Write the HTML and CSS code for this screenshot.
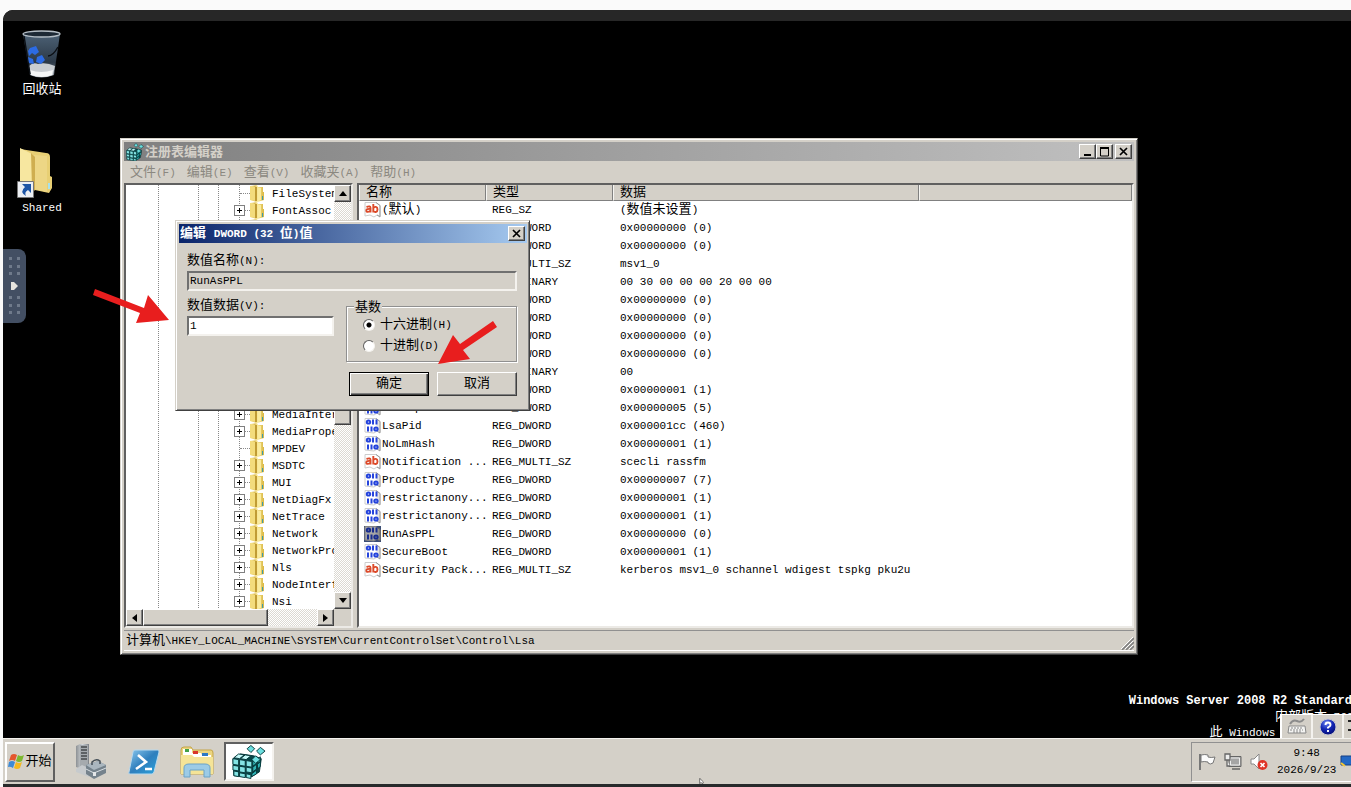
FILE: index.html
```html
<!DOCTYPE html>
<html lang="zh-CN">
<head>
<meta charset="utf-8">
<title>注册表编辑器</title>
<link rel="stylesheet" href="styles.css">
</head>
<body>
<svg class="defs" aria-hidden="true">
  <defs>
    <linearGradient id="gold" x1="0" x2="1"><stop offset="0" stop-color="#fff3ae"/><stop offset=".35" stop-color="#d9b94e"/><stop offset=".5" stop-color="#fbeb9d"/><stop offset="1" stop-color="#d8b640"/></linearGradient>
    <linearGradient id="glass" x1="0" y1="0" x2="0" y2="1"><stop offset="0" stop-color="#4c6175"/><stop offset=".65" stop-color="#2c3947"/><stop offset="1" stop-color="#8b939b"/></linearGradient>
    <linearGradient id="psblue" x1="0" y1="0" x2="1" y2="1"><stop offset="0" stop-color="#8cc8ee"/><stop offset=".5" stop-color="#2f7fbd"/><stop offset="1" stop-color="#2aa3dd"/></linearGradient>
    <linearGradient id="steel" x1="0" x2="1"><stop offset="0" stop-color="#8d9195"/><stop offset=".5" stop-color="#d3d7da"/><stop offset="1" stop-color="#7c8187"/></linearGradient>
    <radialGradient id="help" cx=".4" cy=".25" r=".8"><stop offset="0" stop-color="#6d86f0"/><stop offset=".5" stop-color="#1226b4"/><stop offset="1" stop-color="#020a70"/></radialGradient>
    <symbol id="i-folder" viewBox="0 0 15 17"><path d="M0 1l7-1 1 2 5 0v5h1v8l-7 2-7-2z" fill="url(#gold)"/><path d="M0 1l5 1 1 14-6-1z" fill="#f3dc7c"/><path d="M5 2l2 0v14l-2 0z" fill="#c09c34"/><path d="M8 3l3 0v12l-3 1z" fill="#faec9f"/><path d="M12 11h1v4h-1z" fill="#3f9ba8"/></symbol>
    <symbol id="i-bin" viewBox="0 0 17 16"><path d="M1 .5h11l4 3V14l-3-1-3 2-9-1z" fill="#fff" stroke="#ccc"/><path d="M12 .5l4 3V15l-3-2" fill="#e4e4e4" stroke="#999"/><g fill="none" stroke="#2443dc" stroke-width="2"><ellipse cx="4.500" cy="4" rx="1.700" ry="1.600"/><path d="M9 1.500v5M12.500 1.500v5M4 8.500v5M7.500 8.500v5"/><ellipse cx="12" cy="11" rx="1.700" ry="1.600"/></g></symbol>
    <symbol id="i-str" viewBox="0 0 17 16"><path d="M1 .5h11l4 3V14l-3-1-3 2-4-2-5 1z" fill="#fff" stroke="#ccc"/><path d="M12 .5l4 3V15l-3-2" fill="none" stroke="#999"/><g fill="none" stroke="#dc4a2a" stroke-width="1.900"><path d="M2.500 5q4-1.600 4 1v4.500M6.500 6.900q-4.200-.3-4.200 1.500 0 1.500 1.600 1.500 2 0 2.600-1.700M9.300 2v8.500M9.300 6.200q1-1.600 2.600-1.300 1.600.3 1.600 2.500t-1.700 2.600q-1.500.2-2.500-1"/></g></symbol>
    <symbol id="i-cubes" viewBox="0 0 36 36"><g stroke="#06383a" stroke-width="1" stroke-linejoin="round"><path d="M1 15l8-5 14 2 8 3-2 14-10 6-17-2z" fill="#074547"/><g fill="#84e4e4"><path d="M1 15l6 1v6l-6-1zM8 16l6 1v6l-6-1zM1 22l6 1v5l-6-1zM8 23l6 1v6l-6-1zM2 28l5 1v5l-5-1zM8 30l6 1v4l-6-1zM15 17l6 1v6l-6-1zM15 24l6 1v5l-6-1zM15 31l5 1v4l-5-1z"/></g><g fill="#c5fafa"><path d="M2 14l5-4 6 1-5 4zM9 15l5-4 6 1-5 4z"/></g><g fill="#2fb4b6"><path d="M22 18l4-3v5l-4 3zM22 24l4-3v5l-4 3zM21 31l5-4v4l-5 3zM27 15l3-2v5l-3 2zM27 21l3-3v5l-3 3z"/></g><g fill="#6cdfe0"><path d="M20 1l4 3.500-4 4-4-4zM30 3l5 4-5 4-4-4zM25 12l5 4-5 4-4-4z"/></g></g></symbol>
  </defs>
</svg>

<main class="screen">
  <div class="strip"></div>
  <section class="desktop">
    <a class="shortcut recycle" href="#">
      <svg width="40" height="48" viewBox="0 0 40 48" aria-hidden="true"><path d="M1 4l37 0-6 41q-13 5-24 0z" fill="url(#glass)"/><ellipse cx="19.500" cy="4" rx="18.500" ry="3" fill="#1d2935" stroke="#b5bec6" stroke-width="1.300"/><path d="M7 36q4-4 9-2 8-2 17 2l-2 9q-11 4-22 0z" fill="#c9cdd1"/><path d="M8 40q11 4 23 0l-1 5q-10 4-21 0z" fill="#f5f6f6"/><path d="M26 26q5 0 10-9M2 6l6 38" fill="none" stroke="#0b0f14" stroke-width="1.500"/><path d="M8 18l6-2 3 6-4 3-3-2-3 3-1-5zM6 27l5 2 1 5-5-1zM15 27l5-2 3 5-4 4-5-2z" fill="#2c6be4"/></svg>
      <span class="zh">回收站</span>
    </a>
    <a class="shortcut shared" href="#">
      <svg width="36" height="50" viewBox="0 0 36 50" aria-hidden="true"><path d="M3 1l26 4q4 0 4 4v19l2 1v11l-3 5-14-3z" fill="#e8cf74"/><path d="M3 0l12 6q2 1 2 4v37L3 40z" fill="#f7e7a0"/><path d="M17 7l13 1v36l-13-3z" fill="#edd685"/><path d="M14 5l4 4v34l-3-3z" fill="#cfae50"/><path d="M31 35h2v6h-2z" fill="#a8e1ec"/><path d="M.5 33.500h16v16H.5z" fill="#eceff3" stroke="#777"/><path d="M5 36h9v9l-3-3q-4 2-2 6-7-4-1-9z" fill="#1d55a5"/></svg>
      <span class="en">Shared</span>
    </a>
    <button class="drawer" type="button" aria-label="展开工具栏">
      <svg width="23" height="74" viewBox="0 0 23 74" aria-hidden="true"><g fill="#6f7a8b"><path d="M6 8h3v3H6zM14 8h3v3h-3zM6 16h3v3H6zM14 16h3v3h-3zM6 23h3v3H6zM14 23h3v3h-3zM6 47h3v3H6zM14 47h3v3h-3zM6 55h3v3H6zM14 55h3v3h-3zM6 62h3v3H6zM14 62h3v3h-3z"/></g><path d="M8 33h3l4 4-4 4H8z" fill="#e6e3de"/></svg>
    </button>

    <div class="watermark">
      <b class="edition">Windows Server 2008 R2 Standard</b>
      <span><span class="zh">内部版本</span> 7601</span>
      <span><span class="zh">此</span> Windows <span class="zh">副本不是正版</span></span>
    </div>

    <div class="langbar">
      <button type="button" aria-label="键盘"><svg width="20" height="18" viewBox="0 0 20 18" aria-hidden="true"><path d="M3 6q3-5 7-3t7-2" fill="none" stroke="#8b8b8b" stroke-width="2"/><path d="M2 8h16l1 7H1z" fill="#f4f4f2" stroke="#888"/><path d="M4 10h12M3 12h13M6 14h8" stroke="#888" stroke-dasharray="2 1"/></svg></button>
      <button type="button" aria-label="帮助"><svg width="18" height="18" viewBox="0 0 18 18" aria-hidden="true"><circle cx="9" cy="9" r="8" fill="url(#help)" stroke="#c7c7d0"/><path d="M6.500 7q0-2.500 2.500-2.500T11.500 7Q11.500 8.300 9 9.500v1M9 12v2" fill="none" stroke="#fff" stroke-width="1.900"/></svg></button>
      <span class="langmore"></span>
    </div>

    <section class="window editor" aria-label="注册表编辑器">
      <header class="titlebar">
        <svg width="18" height="18" aria-hidden="true"><use href="#i-cubes"/></svg>
        <h1>注册表编辑器</h1>
        <button class="cap" type="button" aria-label="最小化"><svg width="12" height="10" viewBox="0 0 12 10"><path d="M2 8h7" stroke="#000" stroke-width="2"/></svg></button>
        <button class="cap" type="button" aria-label="最大化"><svg width="12" height="10" viewBox="0 0 12 10"><path d="M1.500 0v9h8V0" fill="none" stroke="#000"/><path d="M1 1h9" stroke="#000" stroke-width="2"/></svg></button>
        <button class="cap last" type="button" aria-label="关闭"><svg width="12" height="10" viewBox="0 0 12 10"><path d="M2 1l7 7M9 1L2 8" stroke="#000" stroke-width="1.700"/></svg></button>
      </header>
      <nav class="menu">
        <a><span class="zh">文件</span>(F)</a><a><span class="zh">编辑</span>(E)</a><a><span class="zh">查看</span>(V)</a><a><span class="zh">收藏夹</span>(A)</a><a><span class="zh">帮助</span>(H)</a>
      </nav>
      <div class="panes">
        <div class="pane tree">
          <ul class="keys" id="keys"></ul>
          <div class="vbar"><button type="button" class="sb" aria-label="向上"><svg width="8" height="5" viewBox="0 0 8 5"><path d="M0 5l4-5 4 5z"/></svg></button><div class="vthumb"></div><button type="button" class="sb" aria-label="向下"><svg width="8" height="5" viewBox="0 0 8 5"><path d="M0 0l4 5 4-5z"/></svg></button></div>
          <div class="hbar"><button type="button" class="sb" aria-label="向左"><svg width="5" height="8" viewBox="0 0 5 8"><path d="M5 0L0 4l5 4z"/></svg></button><div class="hthumb"></div><button type="button" class="sb" aria-label="向右"><svg width="5" height="8" viewBox="0 0 5 8"><path d="M0 0l5 4-5 4z"/></svg></button></div>
        </div>
        <div class="pane list">
          <table>
            <colgroup><col class="c-name"><col class="c-type"><col class="c-data"><col></colgroup>
            <thead><tr><th>名称</th><th>类型</th><th>数据</th><th></th></tr></thead>
            <tbody id="values"></tbody>
          </table>
        </div>
      </div>
      <footer class="status"><span><span class="zh">计算机</span>\HKEY_LOCAL_MACHINE\SYSTEM\CurrentControlSet\Control\Lsa</span>
        <svg width="13" height="13" viewBox="0 0 13 13" aria-hidden="true"><path d="M1 13L13 1M5 13l8-8M9 13l4-4" stroke="#808080" stroke-width="1.600"/><path d="M0 12L12 0M4 12l8-8M8 12l4-4" stroke="#fff"/></svg>
      </footer>
    </section>

    <form class="window dialog" aria-labelledby="dlg">
      <header class="titlebar active">
        <h2 id="dlg">编辑 <span class="en">DWORD (32 </span>位<span class="en">)</span>值</h2>
        <button class="cap last" type="button" aria-label="关闭"><svg width="12" height="10" viewBox="0 0 12 10"><path d="M2 1l7 7M9 1L2 8" stroke="#000" stroke-width="1.700"/></svg></button>
      </header>
      <div class="body">
        <label for="vname"><span class="zh">数值名称</span>(N):</label>
        <input class="field" id="vname" type="text" value="RunAsPPL" readonly>
        <div class="cols">
          <div class="value">
            <label for="vdata"><span class="zh">数值数据</span>(V):</label>
            <input class="field edit" id="vdata" type="text" value="1">
          </div>
          <fieldset>
            <legend>基数</legend>
            <label><input type="radio" name="base" checked><span><span class="zh">十六进制</span>(H)</span></label>
            <label><input type="radio" name="base"><span><span class="zh">十进制</span>(D)</span></label>
          </fieldset>
        </div>
        <div class="actions"><button class="btn default" type="button">确定</button><button class="btn" type="button">取消</button></div>
      </div>
    </form>

    <svg class="arrow first" width="80" height="38" viewBox="0 0 80 38" aria-hidden="true"><path d="M4 0L53 19l4-13 21 25-33 3 4-10L2 6z" fill="#e81e1e"/></svg>
    <svg class="arrow second" width="64" height="46" viewBox="0 0 64 46" aria-hidden="true"><path d="M57 0l4 6-34 23 7 9-32 5 15-29 7 9z" fill="#e81e1e"/></svg>
  </section>

  <footer class="taskbar">
    <button class="start" type="button">
      <svg width="17" height="17" viewBox="0 0 17 17" aria-hidden="true"><path d="M3 2q3-2 6 0L7 8Q4 6 1 8z" fill="#e4572e"/><path d="M10 2q3 2 6 0l-2 6q-3 2-6 0z" fill="#7cb82f"/><path d="M1 9q3-2 6 0l-2 6q-3-2-5-1z" fill="#3d8ad6"/><path d="M8 9q3 2 6 0l-2 6q-3 2-6 0z" fill="#f4b81f"/></svg>
      开始
    </button>
    <a class="pin" href="#" aria-label="服务器管理器"><svg width="32" height="36" viewBox="0 0 32 36" aria-hidden="true"><path d="M1 2l4-2h9v23l-5 3-8-3z" fill="url(#steel)"/><path d="M5 1h8v22l-4 2-4-2z" fill="#a5aaae"/><path d="M6 3h6M6 6h6M6 9h6M6 12h6M6 15h6" stroke="#45494c" stroke-width="1.300"/><path d="M1 25l6-4 9 4-2 8-13-5z" fill="#c6cacd"/><path d="M11 21l12-4 8 4v8l-12 6-8-5z" fill="#75828c"/><path d="M11 21l12-4 8 4-12 5z" fill="#aab6bf"/><path d="M17 21v-3q4-4 8-1v3" fill="none" stroke="#454f58" stroke-width="1.500"/><path d="M11 25l8 4 12-5" fill="none" stroke="#d7dde2"/><path d="M18 28h3v4h-3z" fill="#e3e6e8"/></svg></a>
    <a class="pin" href="#" aria-label="PowerShell"><svg width="32" height="26" viewBox="0 0 32 26" aria-hidden="true"><path d="M7 1h23q1 0 1 2l-5 20q-1 2-2 2H2q-2 0-1-2L5 3q0-2 2-2z" fill="url(#psblue)" stroke="#b9d8ec"/><path d="M10 6l8 7-10 7M17 20h7" fill="none" stroke="#fff" stroke-width="2.600"/></svg></a>
    <a class="pin" href="#" aria-label="资源管理器"><svg width="34" height="34" viewBox="0 0 34 34" aria-hidden="true"><path d="M1 5q0-3 3-3h7l2 3h18q2 0 2 3v21H1z" fill="#ecd57f" stroke="#c5a548"/><path d="M3 4h9v4h9l1 2h9v3H3z" fill="#fff"/><path d="M5 4h4v3H5z" fill="#43a047"/><path d="M13 6h5v3h-5z" fill="#d9372b"/><path d="M22 8h6v3h-6z" fill="#2d78c5"/><path d="M1 10h11l2 2h19v17H1z" fill="#f5e497"/><path d="M4 32V23q0-4 5-4h16q5 0 5 4v9h-6v-7H10v7z" fill="#9ccbe6" stroke="#6ba3c8"/></svg></a>
    <a class="pin current" href="#" aria-label="注册表编辑器"><svg width="34" height="35" aria-hidden="true"><use href="#i-cubes"/></svg></a>
    <div class="tray">
      <svg width="18" height="18" viewBox="0 0 18 18" aria-hidden="true"><path d="M2 1v16" stroke="#777" stroke-width="2"/><path d="M3 2q4-1 7 0v2q3 1 7 0l-2 6q-3 2-5 0v-1q-4-1-7 0z" fill="#fbfbfb" stroke="#777"/></svg>
      <svg width="18" height="18" viewBox="0 0 18 18" aria-hidden="true"><path d="M5 3.500h12v10H5z" fill="#a5a5a5" stroke="#666"/><path d="M6.500 5h9v7h-9z" fill="none" stroke="#eee"/><path d="M1 1h5v6H1zM3 7v6h3M8 16h8" fill="#eee" stroke="#666" stroke-width="1.300"/></svg>
      <svg width="18" height="18" viewBox="0 0 18 18" aria-hidden="true"><path d="M1 6h3l5-5v15l-5-5H1z" fill="#fff" stroke="#888"/><circle cx="12.500" cy="12" r="5" fill="#df3427"/><path d="M10.500 10l4 4M14.500 10l-4 4" stroke="#fff" stroke-width="1.700"/></svg>
      <time class="clock">9:48<br>2026/9/23</time>
      <svg class="peek" width="18" height="18" viewBox="0 0 18 18" aria-hidden="true"><path d="M1 3h17v9H1z" fill="#2368c4" stroke="#173f82"/><path d="M1 10l4 3" stroke="#f3c735" stroke-width="2"/></svg>
    </div>
    <svg class="pointer" width="7" height="10" viewBox="0 0 7 10" aria-hidden="true"><path d="M.5.5v9l2-2 3 2 1-3z" fill="#fff" stroke="#222"/></svg>
  </footer>
  <div class="base"></div>
</main>
<script src="app.js"></script>
</body>
</html>
```

FILE: styles.css
```css
* { box-sizing: border-box; }
body {
  margin: 0;
  height: 100vh;
  padding: 10px 0 0 3px;
  overflow: hidden;
  background: #fafafa;
  color: #000;
  font: 11px/16px "Liberation Mono", "Noto Sans CJK SC", monospace;
}
button, input { font: inherit; color: inherit; border-radius: 0; }
button { padding: 0; }
svg { display: block; flex: none; }
.defs { position: absolute; width: 0; height: 0; }
.zh, h1, h2, th, legend, .btn, .start { font-family: "Liberation Mono", "Noto Sans CJK SC", sans-serif; font-size: 13px; }
.en { font-size: 11px; }

.screen { height: 100%; display: flex; flex-direction: column; overflow: hidden; border-top-left-radius: 10px; background: #000; }
.strip { height: 11px; flex: none; background: #272727; }
.base { height: 3px; flex: none; background: #272a2b; }
.desktop { flex: 1; min-height: 0; position: relative; overflow: hidden; background: #000; }

.shortcut { position: absolute; width: 78px; display: flex; flex-direction: column; align-items: center; color: #fff; text-decoration: none; }
.recycle { left: 0; top: 9px; gap: 4px; }
.shared { left: 0; top: 127px; gap: 2px; }
.shared svg { margin-right: 14px; }
.drawer { position: absolute; left: 0; top: 228px; border: 0; background: #434f63; border-radius: 0 8px 8px 0; overflow: hidden; }

.watermark { position: absolute; right: -9px; bottom: -3px; display: flex; flex-direction: column; align-items: flex-end; color: #fff; line-height: 15px; white-space: pre; }
.edition { font-size: 12px; margin-right: 8px; }
.langbar { position: absolute; right: 0; bottom: 0; width: 71px; height: 24px; display: flex; background: #d4d0c8; border-top: 1px solid #fff; border-left: 2px solid #fff; }
.langbar button { width: 32px; display: grid; place-items: center; border: 0; border-right: 2px solid #f4f2ee; background: none; }
.langmore { margin: 5px 0 0 4px; width: 3px; height: 11px; border: solid #222; border-width: 2px 0; }

.window { position: absolute; display: flex; flex-direction: column; background: #d4d0c8; border: 1px solid; border-color: #d4d0c8 #404040 #404040 #d4d0c8; box-shadow: inset 1px 1px #fff, inset -1px -1px #808080; padding: 3px; }
.titlebar { display: flex; align-items: center; height: 19px; flex: none; padding: 0 2px; color: #d4d0c8; background: linear-gradient(90deg, #808080, #c0c0c0); }
.titlebar h1, .titlebar h2 { flex: 1; margin: 0; font-weight: 700; line-height: 18px; white-space: pre; }
.titlebar h1 { padding: 2px 0 0 1px; }
.titlebar.active { padding-left: 1px; color: #fff; background: linear-gradient(90deg, #0a246a, #a6caf0); }
.cap, .sb, .vthumb, .hthumb, .btn { background: #d4d0c8; border: 1px solid; border-color: #fff #404040 #404040 #fff; box-shadow: inset -1px -1px #808080; }
.cap { width: 17px; height: 15px; display: grid; place-items: center; }
.cap.last { margin-left: 2px; }
.titlebar.active .cap { margin-left: 0; }

.editor { left: 117px; top: 117px; width: 1018px; height: 517px; }
.menu { height: 22px; flex: none; display: flex; align-items: center; gap: 11px; padding: 2px 0 0 6px; color: #8b8880; }
.panes { flex: 1; min-height: 0; display: flex; gap: 4px; }
.pane { background: #fff; border: 2px solid; border-color: #606060 #eceae6 #eceae6 #606060; overflow: hidden; }
.tree { width: 229px; flex: none; display: grid; grid-template: minmax(0, 1fr) 17px / minmax(0, 1fr) 17px; background: #d4d0c8; }
.keys {
  margin: 0; padding: 0; list-style: none; overflow: hidden;
  background:
    repeating-linear-gradient(#888 0 1px, transparent 1px 2px) 32px 0 / 1px 100% no-repeat,
    repeating-linear-gradient(#888 0 1px, transparent 1px 2px) 72px 0 / 1px 100% no-repeat,
    repeating-linear-gradient(#888 0 1px, transparent 1px 2px) 92px 0 / 1px 100% no-repeat,
    repeating-linear-gradient(#888 0 1px, transparent 1px 2px) 113px 0 / 1px 100% no-repeat,
    #fff;
}
.keys li { height: 17px; padding-left: 108px; display: flex; align-items: center; white-space: nowrap; }
.keys li span { padding-left: 7px; }
.toggle { width: 11px; height: 11px; flex: none; border: 1px solid #808080; background: linear-gradient(#000, #000) center / 5px 1px no-repeat, linear-gradient(#000, #000) center / 1px 5px no-repeat, #fff; }
.stub { width: 5px; flex: none; border-top: 1px dotted #888; }
.leaf .stub { width: 10px; margin-left: 6px; }
.vbar, .hbar { display: flex; background: repeating-conic-gradient(#fff 0 25%, #dcd9d2 0 50%) 0 0 / 2px 2px; }
.vbar { flex-direction: column; justify-content: space-between; }
.sb { width: 17px; height: 17px; flex: none; display: grid; place-items: center; }
.vthumb { height: 16px; margin-top: 40px; }
.hthumb { width: 125px; margin-right: auto; }

.list { flex: 1; min-width: 0; }
table { width: 100%; table-layout: fixed; border-collapse: separate; border-spacing: 0; white-space: pre; }
.c-name { width: 127px; } .c-type { width: 127px; } .c-data { width: 306px; }
th { height: 16px; padding: 0 6px; text-align: left; font-weight: 400; line-height: 15px; background: #d4d0c8; border: solid; border-color: #f6f5f2 #808080 #808080 #f6f5f2; border-width: 0 1px 1px; }
td { height: 18px; padding: 0 0 0 6px; line-height: 18px; }
td:nth-child(3) { padding-left: 7px; }
td .item { display: flex; align-items: center; gap: 1px; margin-left: -1px; height: 18px; }
.item.selected svg { background: #5a76b4; filter: brightness(.65); }

.status { height: 21px; flex: none; margin-top: 2px; padding-left: 2px; display: flex; align-items: center; justify-content: space-between; border-top: 1px solid #909090; border-bottom: 1px solid #fff; line-height: 18px; }
.status svg { align-self: flex-end; }

.dialog { left: 172px; top: 199px; width: 355px; height: 191px; margin: 0; }
.dialog .titlebar { margin-right: -1px; }
.body { flex: 1; padding: 9px 9px 10px 8px; display: flex; flex-direction: column; }
.body label { line-height: 18px; }
.field { display: block; width: 100%; height: 20px; margin-top: 1px; padding: 0 1px; background: #d4d0c8; border: 2px solid; border-color: #707070 #f4f2ee #f4f2ee #707070; outline: 0; }
.edit { background: #fff; }
.cols { display: flex; justify-content: space-between; margin-top: 6px; }
.value { width: 147px; display: flex; flex-direction: column; }
fieldset { position: relative; width: 171px; height: 56px; margin: 9px 0 0; padding: 9px 0 0 16px; border: 1px solid #909090; box-shadow: 1px 1px #fff, inset 1px 1px #fff; display: flex; flex-direction: column; gap: 3px; }
legend { position: absolute; left: 7px; top: -8px; padding: 0 1px; line-height: 18px; background: #d4d0c8; }
fieldset label { display: flex; align-items: center; gap: 5px; }
input[type="radio"] { appearance: none; width: 12px; height: 12px; margin: 0; border-radius: 50%; border: 1px solid; border-color: #606060 #f4f2ee #f4f2ee #606060; background: #fff; }
input[type="radio"]:checked { background: radial-gradient(circle, #000 0 2px, #fff 3px); }
.actions { display: flex; justify-content: flex-end; gap: 8px; margin-top: auto; margin-bottom: 1px; }
.btn { width: 80px; height: 24px; }
.btn.default { outline: 1px solid #000; outline-offset: -1px; border-color: #000; box-shadow: inset 1px 1px #fff, inset -1px -1px #404040, inset -2px -2px #808080; }

.arrow { position: absolute; }
.first { left: 88px; top: 268px; }
.second { left: 433px; top: 300px; }

.taskbar { position: relative; height: 46px; flex: none; display: flex; align-items: center; background: #d4d0c8; border-top: 1px solid #f4f2ee; padding: 0 0 0 2px; }
.start { width: 50px; height: 40px; display: flex; align-items: center; justify-content: center; background: #d4d0c8; border: 2px solid; border-color: #fff #606060 #606060 #fff; }
.pin { width: 50px; height: 39px; margin-left: 3px; display: grid; place-items: center; }
.start + .pin { margin-left: 11px; }
.pin.current { margin-left: 2px; background: #fff; border: 2px solid; border-color: #606060 #f4f2ee #f4f2ee #606060; }
.tray { margin-left: auto; width: 160px; height: 40px; padding-left: 6px; display: flex; align-items: center; gap: 8px; border: 1px solid #909090; border-right: 0; border-bottom-color: #fff; overflow: hidden; }
.clock { margin-left: 1px; text-align: center; line-height: 17px; }
.peek { margin-left: -4px; }
.pointer { position: absolute; left: 695px; bottom: 0; height: 6px; width: 7px; overflow: hidden; }
```

FILE: app.js
```js
const keys = [
  ["FileSystem", 0], ["FontAssoc", 1], ["GraphicsDrivers", 1], ["GroupOrderList", 0],
  ["HAL", 1], ["hivelist", 0], ["IDConfigDB", 1], ["Keyboard Layout", 1],
  ["Keyboard Layouts", 1], ["Lsa", 1], ["LsaExtensionConfig", 1], ["LsaInformation", 0],
  ["MediaCategories", 1], ["MediaInterfaces", 1], ["MediaProperties", 1], ["MPDEV", 0],
  ["MSDTC", 1], ["MUI", 1], ["NetDiagFx", 1], ["NetTrace", 1], ["Network", 1],
  ["NetworkProvider", 1], ["Nls", 1], ["NodeInterfaces", 1], ["Nsi", 1], ["", 0]
];
document.getElementById("keys").innerHTML = keys.map(([name, open]) =>
  `<li class="${open ? "" : "leaf"}">${open ? '<i class="toggle"></i>' : ""}<i class="stub"></i>` +
  `<svg width="15" height="17" aria-hidden="true"><use href="#i-folder"/></svg><span>${name}</span></li>`).join("");

const D = "REG_DWORD", M = "REG_MULTI_SZ", B = "REG_BINARY";
const values = [
  ["(<span class='zh'>默认</span>)", "REG_SZ", "(<span class='zh'>数值未设置</span>)"],
  ["auditbasedir...", D, "0x00000000 (0)"],
  ["auditbaseobj...", D, "0x00000000 (0)"],
  ["Authenticati...", M, "msv1_0"],
  ["Bounds", B, "00 30 00 00 00 20 00 00"],
  ["crashonaudit...", D, "0x00000000 (0)"],
  ["disabledomai...", D, "0x00000000 (0)"],
  ["everyoneincl...", D, "0x00000000 (0)"],
  ["forceguest", D, "0x00000000 (0)"],
  ["fullprivileg...", B, "00"],
  ["LimitBlankPa...", D, "0x00000001 (1)"],
  ["LmCompatibil...", D, "0x00000005 (5)"],
  ["LsaPid", D, "0x000001cc (460)"],
  ["NoLmHash", D, "0x00000001 (1)"],
  ["Notification ...", M, "scecli rassfm"],
  ["ProductType", D, "0x00000007 (7)"],
  ["restrictanony...", D, "0x00000001 (1)"],
  ["restrictanony...", D, "0x00000001 (1)"],
  ["RunAsPPL", D, "0x00000000 (0)"],
  ["SecureBoot", D, "0x00000001 (1)"],
  ["Security Pack...", M, "kerberos msv1_0 schannel wdigest tspkg pku2u"]
];
document.getElementById("values").innerHTML = values.map(([name, type, data]) => {
  const icon = type === D || type === B ? "bin" : "str";
  return `<tr><td><div class="item${name === "RunAsPPL" ? " selected" : ""}">` +
    `<svg width="17" height="16" aria-hidden="true"><use href="#i-${icon}"/></svg><span>${name}</span></div></td>` +
    `<td>${type}</td><td>${data}</td><td></td></tr>`;
}).join("");
```
